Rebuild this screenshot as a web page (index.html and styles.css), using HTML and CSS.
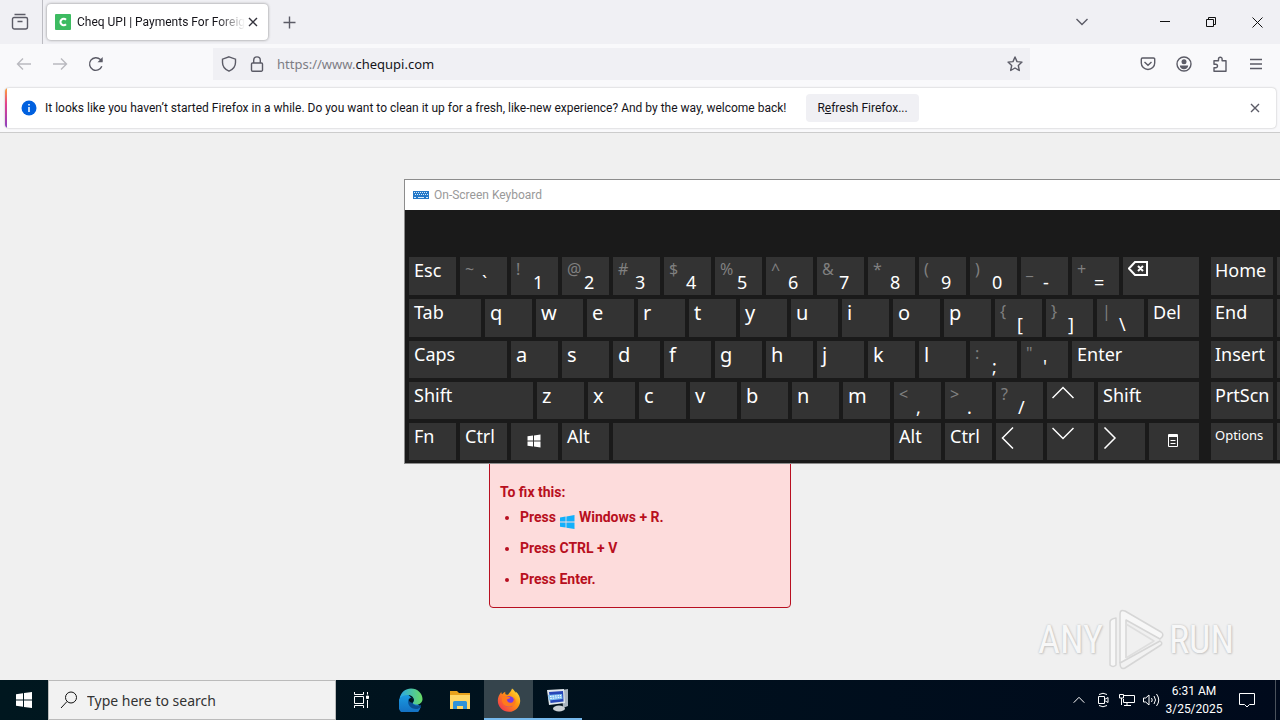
FILE: index.html
```
<!DOCTYPE html>
<html lang="en">

<head>
  <meta charset="UTF-8">
  <meta name="viewport" content="width=device-width, initial-scale=1.0">
  <title>Cheq UPI | Payments For Foreigners</title>
  <link rel="stylesheet" href="styles.css">
</head>

<body>
  <!-- tab strip -->
  <header class="tabs">
    <button class="icon-btn view-btn" aria-label="Firefox View">
      <svg width="18" height="18" viewBox="0 0 18 18" class="line"><path d="M3.5 1.5h11M3 4.5h12a1.500 1.500 0 0 1 1.500 1.500v8a2 2 0 0 1-2 2h-11a2 2 0 0 1-2-2V6A1.500 1.500 0 0 1 3 4.500zM6.500 8.500h5"/></svg>
    </button>
    <div class="tab">
      <svg width="16" height="16" viewBox="0 0 16 16"><rect width="16" height="16" rx="1" fill="#3dbb61"/><path d="M11 5.800A3.200 3.200 0 1 0 11 10.200" fill="none" stroke="#fff" stroke-width="2"/></svg>
      <span class="tab-title">Cheq UPI | Payments For Foreig</span>
      <button class="icon-btn tab-close" aria-label="Close tab">
        <svg width="10" height="10" viewBox="0 0 10 10" class="line dark"><path d="M1 1l8 8M9 1l-8 8"/></svg>
      </button>
    </div>
    <button class="icon-btn new-tab" aria-label="New tab">
      <svg width="13" height="13" viewBox="0 0 13 13" class="line"><path d="M6.500 0.500v12M0.500 6.500h12"/></svg>
    </button>
    <button class="icon-btn all-tabs" aria-label="List all tabs">
      <svg width="14" height="8" viewBox="0 0 14 8" class="line"><path d="M1.500 1l5.500 5.500L12.500 1"/></svg>
    </button>
    <div class="win-btns">
      <button class="icon-btn" aria-label="Minimize"><svg width="10" height="10" viewBox="0 0 10 10" class="line black"><path d="M0 4.500h10"/></svg></button>
      <button class="icon-btn" aria-label="Restore"><svg width="10" height="10" viewBox="0 0 10 10" class="line black"><path d="M.5 2.500h7v7h-7zM2.500 2.500v-2h7v7h-2"/></svg></button>
      <button class="icon-btn" aria-label="Close"><svg width="11" height="11" viewBox="0 0 11 11" class="line black"><path d="M.5.5l10 10M10.500.5l-10 10"/></svg></button>
    </div>
  </header>

  <!-- navigation bar -->
  <nav class="navbar">
    <button class="icon-btn nav-btn off" aria-label="Back"><svg width="16" height="16" viewBox="0 0 16 16" class="line"><path d="M15 8H1.500M7 2.500L1.500 8 7 13.500"/></svg></button>
    <button class="icon-btn nav-btn off" aria-label="Forward"><svg width="16" height="16" viewBox="0 0 16 16" class="line"><path d="M1 8h13.500M9 2.500L14.500 8 9 13.500"/></svg></button>
    <button class="icon-btn nav-btn" aria-label="Reload"><svg width="16" height="16" viewBox="0 0 16 16" class="line"><path d="M13.800 10.200A6.300 6.300 0 1 1 12.400 3.600L14 5.200"/><path d="M14.700 1v5.200H9.500z" fill="#5b5b66" stroke="none"/></svg></button>
    <div class="urlbar">
      <svg width="16" height="16" viewBox="0 0 16 16" class="line"><path d="M8 .8l6.500 2.400v3.300c0 4-2.500 7-6.500 8.700C4 13.500 1.500 10.500 1.500 6.500V3.200z"/></svg>
      <svg width="16" height="16" viewBox="0 0 16 16" class="line"><path d="M3.500 7h9a1 1 0 0 1 1 1v6a1.200 1.200 0 0 1-1.200 1.200H3.700A1.200 1.200 0 0 1 2.500 14V8a1 1 0 0 1 1-1zM4.700 7V4.200a3.300 3.300 0 0 1 6.600 0V7"/></svg>
      <a class="url" href="#"><span>https://www.</span>chequpi.com</a>
      <button class="icon-btn" aria-label="Bookmark this page"><svg width="16" height="16" viewBox="0 0 16 16" class="line"><path d="M8 1l2 4.600 5 .5-3.700 3.400 1 5L8 12l-4.300 2.500 1-5L1 6.100l5-.5z" stroke-linejoin="round"/></svg></button>
    </div>
    <button class="icon-btn nav-btn" aria-label="Save to Pocket"><svg width="16" height="16" viewBox="0 0 16 16" class="line"><path d="M2.500 2h11a1.200 1.200 0 0 1 1.200 1.200V7a6.700 6.500 0 0 1-13.400 0V3.200A1.200 1.200 0 0 1 2.500 2zM4.500 6L8 9.300 11.500 6"/></svg></button>
    <button class="icon-btn nav-btn" aria-label="Account"><svg width="16" height="16" viewBox="0 0 16 16" class="line"><circle cx="8" cy="8" r="7"/><circle cx="8" cy="5.700" r="2.500" fill="#5b5b66" stroke="none"/><path d="M3.800 9.500h8.400c0 2.300-2 3.700-4.200 3.700s-4.200-1.400-4.200-3.700z" fill="#5b5b66" stroke="none"/></svg></button>
    <button class="icon-btn nav-btn" aria-label="Extensions"><svg width="16" height="16" viewBox="0 0 16 16" class="line"><path d="M2 7V4.700h4.500V3a1.800 1.800 0 0 1 3.600 0v1.700H14v10.500H2v-3.400h1.700a1.800 1.800 0 0 0 0-3.600H2z" stroke-linejoin="round"/></svg></button>
    <button class="icon-btn nav-btn" aria-label="Menu"><svg width="14" height="12" viewBox="0 0 14 12" class="line"><path d="M1 1.500h12M1 6h12M1 10.500h12"/></svg></button>
  </nav>

  <!-- notification -->
  <section class="notice">
    <div class="notice-card">
      <svg width="16" height="16" viewBox="0 0 16 16"><circle cx="8" cy="8" r="7.500" fill="#0060df"/><path d="M8 7v5M8 4v1.500" stroke="#fff" stroke-width="1.500"/></svg>
      <span class="notice-text">It looks like you haven’t started Firefox in a while. Do you want to clean it up for a fresh, like-new experience? And by the way, welcome back!</span>
      <button class="refresh">R<u>e</u>fresh Firefox...</button>
      <button class="icon-btn notice-close" aria-label="Dismiss"><svg width="10" height="10" viewBox="0 0 10 10" class="line"><path d="M1 1l8 8M9 1L1 9"/></svg></button>
    </div>
  </section>

  <main class="page">
    <div class="fix-box">
      <p>To fix this:</p>
      <ul>
        <li>Press <svg class="win-logo" width="16" height="16" viewBox="0 0 16 16" fill="#12b0fb"><path d="M1 3.400l5.600-.9v5.100H1zM7.400 2.400L15.500 1v6.600H7.400zM1 8.400h5.600v5.100L1 12.700zM7.400 8.400h8.100V15l-8.100-1.300z"/></svg> Windows + R.</li>
        <li>Press CTRL + V</li>
        <li>Press Enter.</li>
      </ul>
    </div>
    <div class="watermark">
      <span>ANY</span>
      <svg width="58" height="64" viewBox="0 0 58 64" fill="none" stroke="#d6d6d6" stroke-width="1.500" stroke-linejoin="round">
        <path d="M3 57V14q0-3 6-4v47q-3 3-6 0z" fill="#f7f7f7"/>
        <path d="M13 55V6q0-5 5-3l36 21q3 2 1 5l-2 2-34-19v38" fill="#f7f7f7"/>
        <path d="M13 55l40-22q3 2 1 4L18 60q-5 2-5-5z" fill="#f2f2f2"/>
        <path d="M19 50l28-17-28-17" stroke="#dedede"/>
      </svg>
      <span>RUN</span>
    </div>
  </main>

  <!-- on-screen keyboard window -->
  <section class="osk">
    <div class="osk-title">
      <svg width="16" height="10" viewBox="0 0 16 10"><rect y="1" width="16" height="8" fill="#2478c8"/><path d="M1 2.500h14M2 4.500h13" stroke="#d6eafa" stroke-dasharray="1 1"/><path d="M1 7.500h2M5 7.500h6M13 7.500h2" stroke="#d6eafa"/></svg>
      <span>On-Screen Keyboard</span>
    </div>
    <div class="keys">
      <div class="row">
        <button class="key word">Esc</button>
        <button class="key two"><sup>~</sup><span>`</span></button>
        <button class="key two"><sup>!</sup><span>1</span></button>
        <button class="key two"><sup>@</sup><span>2</span></button>
        <button class="key two"><sup>#</sup><span>3</span></button>
        <button class="key two"><sup>$</sup><span>4</span></button>
        <button class="key two"><sup>%</sup><span>5</span></button>
        <button class="key two"><sup>^</sup><span>6</span></button>
        <button class="key two"><sup>&amp;</sup><span>7</span></button>
        <button class="key two"><sup>*</sup><span>8</span></button>
        <button class="key two"><sup>(</sup><span>9</span></button>
        <button class="key two"><sup>)</sup><span>0</span></button>
        <button class="key two"><sup>_</sup><span>-</span></button>
        <button class="key two"><sup>+</sup><span>=</span></button>
        <button class="key fill" aria-label="Backspace"><svg width="20" height="16" viewBox="0 0 20 16" class="line white bold"><path d="M7 1h12v13H7L1 7.500zM10 5l5 5M15 5l-5 5"/></svg></button>
        <button class="key word side">Home</button>
        <span class="key edge"></span>
      </div>
      <div class="row">
        <button class="key word tab-key">Tab</button>
        <button class="key">q</button>
        <button class="key">w</button>
        <button class="key">e</button>
        <button class="key">r</button>
        <button class="key">t</button>
        <button class="key">y</button>
        <button class="key">u</button>
        <button class="key">i</button>
        <button class="key">o</button>
        <button class="key">p</button>
        <button class="key two"><sup>{</sup><span>[</span></button>
        <button class="key two"><sup>}</sup><span>]</span></button>
        <button class="key two"><sup>|</sup><span>\</span></button>
        <button class="key word fill">Del</button>
        <button class="key word side">End</button>
        <span class="key edge"></span>
      </div>
      <div class="row">
        <button class="key word caps-key">Caps</button>
        <button class="key">a</button>
        <button class="key">s</button>
        <button class="key">d</button>
        <button class="key">f</button>
        <button class="key">g</button>
        <button class="key">h</button>
        <button class="key">j</button>
        <button class="key">k</button>
        <button class="key">l</button>
        <button class="key two"><sup>:</sup><span>;</span></button>
        <button class="key two"><sup>"</sup><span>'</span></button>
        <button class="key word fill">Enter</button>
        <button class="key word side">Insert</button>
        <span class="key edge"></span>
      </div>
      <div class="row">
        <button class="key word shift-key">Shift</button>
        <button class="key">z</button>
        <button class="key">x</button>
        <button class="key">c</button>
        <button class="key">v</button>
        <button class="key">b</button>
        <button class="key">n</button>
        <button class="key">m</button>
        <button class="key two"><sup>&lt;</sup><span>,</span></button>
        <button class="key two"><sup>&gt;</sup><span>.</span></button>
        <button class="key two"><sup>?</sup><span>/</span></button>
        <button class="key" aria-label="Up"><svg width="22" height="22" viewBox="0 0 22 22" class="line white arrow"><path d="M.5 12L11 1.500 21.500 12"/></svg></button>
        <button class="key word fill">Shift</button>
        <button class="key word side">PrtScn</button>
        <span class="key edge"></span>
      </div>
      <div class="row">
        <button class="key word">Fn</button>
        <button class="key word">Ctrl</button>
        <button class="key mid" aria-label="Windows"><svg width="14" height="14" viewBox="0 0 14 14" fill="#fff"><path d="M.5 2.200L6 1.500v5H.5zM7 1.400L13.500.5v6H7zM.5 7.500H6v5l-5.500-.7zM7 7.500h6.500v6L7 12.600z"/></svg></button>
        <button class="key word">Alt</button>
        <button class="key space-key" aria-label="Space"></button>
        <button class="key word">Alt</button>
        <button class="key word">Ctrl</button>
        <button class="key" aria-label="Left"><svg width="22" height="22" viewBox="0 0 22 22" class="line white arrow"><path d="M12 .5L1.500 11 12 21.500"/></svg></button>
        <button class="key" aria-label="Down"><svg width="22" height="22" viewBox="0 0 22 22" class="line white arrow"><path d="M.5 1L11 11.500 21.500 1"/></svg></button>
        <button class="key" aria-label="Right"><svg width="22" height="22" viewBox="0 0 22 22" class="line white arrow"><path d="M1.500.5L12 11 1.500 21.500"/></svg></button>
        <button class="key mid fill" aria-label="Context menu"><svg width="10" height="13" viewBox="0 0 10 13" class="line white"><path d="M.5.5h9v12h-9zM0 2.500h10M2.500 6.500h5M2.500 9.500h5"/><path d="M1 1.500h8"/></svg></button>
        <button class="key small side">Options</button>
        <span class="key edge"></span>
      </div>
    </div>
  </section>

  <!-- taskbar -->
  <footer class="taskbar">
    <button class="start" aria-label="Start"><svg width="16" height="16" viewBox="0 0 16 16" fill="#fff"><path d="M0 2.200l7-1v6.300H0zM8 1.100L16 0v7.500H8zM0 8.500h7v6.300l-7-1zM8 8.500h8V16l-8-1.100z"/></svg></button>
    <label class="search">
      <svg width="18" height="18" viewBox="0 0 18 18" class="line black"><circle cx="11" cy="6.500" r="5.500"/><path d="M7 10.500L1 17"/></svg>
      <input type="text" placeholder="Type here to search" aria-label="Search">
    </label>
    <button class="app" aria-label="Task View"><svg width="16" height="16" viewBox="0 0 16 16" class="line white"><path d="M.5 0v2.500h9V0M.5 4.500h9v7h-9zM.5 16v-2.500h9V16M13.500 0v2.500M13.500 8v8"/><path d="M12.500 4h2v2.500h-2z" fill="#fff"/></svg></button>
    <button class="app" aria-label="Edge">
      <svg width="24" height="24" viewBox="0 0 24 24">
        <defs>
          <linearGradient id="edgeTop" x1="0" x2="1"><stop offset="0" stop-color="#2aa7e8"/><stop offset="1" stop-color="#69dc64"/></linearGradient>
          <linearGradient id="edgeLow" y1="0" y2="1" x2="0"><stop offset="0" stop-color="#1b9de2"/><stop offset="1" stop-color="#1268bd"/></linearGradient>
        </defs>
        <path d="M.6 10.500C1.500 7 5 5.500 9 6.500l6 6 6.700 6.500A11.500 11.500 0 1 1 .6 10.500z" fill="url(#edgeLow)"/>
        <path d="M.6 10.500C2 4 6.500.5 12 .5c6.500 0 11.500 5 11.500 10.500 0 3.500-2.700 5.500-6 5.500-2.200 0-3.700-.8-3.700-1.700 0-.7 1-1.100 1-2.900C14.800 9 12 7 8.500 7c-3.400 0-6.300 1.200-7.900 3.500z" fill="url(#edgeTop)"/>
        <path d="M9.500 11.300c-1.700 5.200 2 9.800 7.800 9.700 1.700 0 3-.6 4.200-1.500l.6-2.600c-2.500 1.500-8.300.6-8.300-2.100 0-.7 1-1.100 1-2.900-.7-2.700-4-3.100-5.300-.6z" fill="#0a4f92"/>
        <path d="M13.800 14.800c0-.7 1-1.100 1-2.900 0-2-3.800-2.800-5 0 0 1 1.300 2.800 4 2.900z" fill="#00131c"/>
      </svg>
    </button>
    <button class="app" aria-label="File Explorer"><svg width="22" height="20" viewBox="0 0 22 20"><path d="M1 1h7l2 2h11v16H1z" fill="#e8a21c"/><path d="M1 5h20v14H1z" fill="#ffd766"/><path d="M4 19v-6.500A1.500 1.500 0 0 1 5.500 11h11a1.500 1.500 0 0 1 1.500 1.500V19h-4v-3H8v3z" fill="#2f93da"/></svg></button>
    <button class="app active open" aria-label="Firefox">
      <svg width="24" height="24" viewBox="0 0 24 24">
        <defs>
          <linearGradient id="fox" x1="1" y1="0" x2="0" y2="1"><stop offset="0" stop-color="#fff04a"/><stop offset=".4" stop-color="#ff980e"/><stop offset="1" stop-color="#f0245c"/></linearGradient>
        </defs>
        <path d="M15 .5c2 1.200 3 3 3.500 4.500 0-.5 0-1 .2-1.500 3 2.400 4.500 5.800 4.500 9.500A11.200 11.200 0 0 1 12 23.800 11.200 11.200 0 0 1 .8 12.500c0-3.300 1.400-6 3.500-8.500 0 1 .3 1.700.8 2.300 1-1.300 2-2 3.300-2.500-.4 1.300-.2 2 .5 2.700l2.100.2C12 5 14.500 3 15 .5z" fill="url(#fox)"/>
        <circle cx="12" cy="13.500" r="5.500" fill="#7a3be0"/>
        <path d="M5 9c2-1.500 4-1.300 6-.2 1.800 0 2.300.7 2 1.500L9.800 11.600c.5 3 3 4 5.800 2.600 1.500-1.500 1.500-4 .4-5.200 3 1.800 3.500 5.500 1 8-3.500 3.500-11 1.800-12-4z" fill="#ff7a1c"/>
      </svg>
    </button>
    <button class="app open" aria-label="On-Screen Keyboard"><svg width="24" height="24" viewBox="0 0 24 24"><path d="M16 2l6-1v17l-5 2z" fill="#a9b4bf"/><path d="M1 2l17-1 1 14L3 17z" fill="#dfe6ec"/><path d="M3 4l14-1 .6 10.500L4.500 15z" fill="#2746b8"/><path d="M2 7l14-1 .5 5L3 12.500z" fill="#7fc0f2"/><path d="M4 8.500l11-1M4.300 10.500l11-1.200" stroke="#fff" stroke-dasharray="1.500 1"/><ellipse cx="13" cy="20.500" rx="6" ry="3" fill="#c9cfd4"/></svg></button>

    <div class="tray">
      <span class="tray-icon"><svg width="12" height="8" viewBox="0 0 12 8" class="line white"><path d="M.7 6.700L6 1.300l5.300 5.400"/></svg></span>
      <span class="tray-icon"><svg width="12" height="16" viewBox="0 0 12 16" class="line white"><path d="M2 2.500q4-2.500 8 0M2 13.500q4 2.500 8 0M1.500 4.500h6v7h-6zM7.500 7.500L11 5.500v5l-3.500-2"/></svg></span>
      <span class="tray-icon"><svg width="16" height="14" viewBox="0 0 16 14" class="line white"><path d="M5 2.500h10.500v7H4.500V6M8 12.500v-3M5 12.500h7M.5 1.500h4v3.500h-4zM2.500 5v7"/></svg></span>
      <span class="tray-icon"><svg width="17" height="14" viewBox="0 0 17 14" class="line white"><path d="M.5 5h2.200L6 2v10L2.700 9H.5zM8.500 5q1.500 2 0 4M11 3q3 4 0 8M13.500 1q4.500 6 0 12"/></svg></span>
      <div class="clock"><span>6:31 AM</span><span>3/25/2025</span></div>
      <button class="action-center" aria-label="Notifications"><svg width="16" height="16" viewBox="0 0 16 16" class="line white"><path d="M.5 1.500h15v11h-5L8 15l-2.500-2.500h-5z"/></svg></button>
      <i class="desktop-edge"></i>
    </div>
  </footer>
</body>

</html>
```

FILE: styles.css
```
*{
  box-sizing: border-box;
}
body{
  margin:0;
  min-height:100vh;
  display:flex;
  flex-direction: column;
  background-color:#f0f0f0;
  font-family: Roboto, "Noto Sans", sans-serif;
  font-size:12px;
  color:#15141a;
  overflow:hidden;
}
button{
  font:inherit;
  color:inherit;
  border:0;
  padding:0;
  background:none;
}
svg{
  flex:none;
}
.line{
  fill:none;
  stroke:#5b5b66;
  stroke-width:1.4;
}
.line.dark{
  stroke:#33323c;
}
.line.black{
  stroke:#111;
  stroke-width:1;
}
.line.white{
  stroke:#fff;
  stroke-width:1;
}
.line.bold{
  stroke-width:2;
}
.line.arrow{
  stroke-width:1.5;
}
.icon-btn{
  display:flex;
  align-items: center;
  justify-content: center;
}

/* tab strip */
.tabs{
  display:flex;
  align-items: center;
  height:44px;
  background-color:#f0f0f4;
}
.view-btn{
  width:43px;
  height:44px;
  padding-right:3px;
  border-right:1px solid #bcbcc2;
}
.tab{
  display:flex;
  align-items: center;
  width:221px;
  height:36px;
  margin-left:4px;
  padding:0 7px 0 8px;
  background-color:#fff;
  border-radius:4px;
  box-shadow:0 0 3px rgba(0,0,0,.45);
}
.tab-title{
  flex:1;
  margin-left:6px;
  white-space: nowrap;
  -webkit-mask-image:linear-gradient(to left, transparent, #000 28px);
  mask-image:linear-gradient(to left, transparent, #000 28px);
}
.tab-close{
  width:20px;
  height:24px;
}
.new-tab{
  width:42px;
  height:44px;
}
.all-tabs{
  width:36px;
  height:44px;
  margin-left:auto;
  margin-right:42px;
}
.win-btns{
  display:flex;
}
.win-btns button{
  width:46px;
  height:44px;
}

/* navigation bar */
.navbar{
  display:flex;
  align-items: center;
  height:44px;
  padding:0 6px 4px;
  background-color:#f9f9fb;
}
.nav-btn{
  width:36px;
  height:36px;
}
.off{
  opacity:.4;
}
.urlbar{
  flex:1;
  display:flex;
  align-items: center;
  gap:12px;
  height:32px;
  margin:0 100px 0 99px;
  padding:0 7px 0 8px;
  background-color:#f0f0f4;
}
.url{
  flex:1;
  font-family: "Noto Sans", "Open Sans", sans-serif;
  font-size:13px;
  color:#15141a;
  text-decoration: none;
}
.url span{
  color:#7d7d84;
}

/* notification */
.notice{
  height:45px;
  padding:0 4px 0 5px;
  background-color:#f9f9fb;
  border-bottom:1px solid #ccc;
}
.notice-card{
  display:flex;
  align-items: center;
  height:40px;
  padding:0 11px 0 16px;
  background:linear-gradient(#ffa436, #e2408f 40%, #8a3fc0) left / 2px 100% no-repeat #fff;
  border-radius:4px;
  box-shadow:0 0 2px rgba(0,0,0,.3);
}
.notice-text{
  margin:0 20px 0 8px;
  white-space: nowrap;
}
.refresh{
  height:28px;
  padding:0 11px;
  background-color:#f0f0f4;
  border-radius:4px;
}
.notice-close{
  width:20px;
  height:20px;
  margin-left:auto;
}

/* page */
.page{
  flex:1;
  position: relative;
  padding-top:200px;
}
.fix-box{
  width:302px;
  margin:0 auto;
  padding:148px 10px 17px;
  background-color:#fddcdc;
  border:1px solid #b80f20;
  border-radius:4px;
  color:#b80f20;
  font:bold 14px/21px Roboto, sans-serif;
}
.fix-box p{
  margin:0 0 4px;
}
.fix-box ul{
  margin:0;
  padding-left:20px;
}
.fix-box li + li{
  margin-top:10px;
}
.win-logo{
  height:16px;
  vertical-align: middle;
  margin-bottom:-8px;
}
.watermark{
  position: absolute;
  right:46px;
  bottom:8px;
  display:flex;
  align-items: center;
  gap:4px;
  font:38px "Roboto Condensed", "Liberation Sans Narrow", sans-serif;
  color:#f7f7f7;
  text-shadow:0 0 2px #bbb, 1px 1px 2px #ccc;
}

/* on-screen keyboard */
.osk{
  position: absolute;
  left:404px;
  right:0;
  top:179px;
  border:1px solid #8c8c8c;
  border-right:0;
  overflow:hidden;
  background-color:#1a1a1a;
}
.osk-title{
  display:flex;
  align-items: center;
  gap:5px;
  height:30px;
  padding-left:8px;
  background-color:#fff;
  color:#999;
}
.keys{
  display:grid;
  grid-template-rows:38px 38px 37px 37px 37px;
  gap:4px;
  padding:47px 0 3px 4px;
}
.row{
  display:flex;
  gap:4px;
}
.key{
  flex:none;
  display:flex;
  align-items: flex-start;
  width:47px;
  padding:0 0 0 5px;
  background-color:#333;
  color:#fff;
  font-family: "Noto Sans", "Open Sans", sans-serif;
  font-size:20px;
  line-height:28px;
  text-align: left;
}
.key svg{
  margin-top:4px;
}
.word{
  font-size:18px;
  line-height:26px;
}
.small{
  font-size:13px;
  line-height:24px;
}
.two sup{
  width:17px;
  color:#808080;
  font-size:16px;
  line-height:24px;
  vertical-align: top;
}
.two span{
  font-size:18px;
  padding-top:11px;
}
.key.mid{
  align-items: center;
  justify-content: center;
  padding:0 2px 2px 0;
}
.mid svg{
  margin:0;
}
.tab-key{
  width:72px;
}
.caps-key{
  width:98px;
}
.shift-key{
  width:124px;
}
.space-key{
  width:277px;
}
.fill{
  flex:1;
}
.side{
  width:62px;
  margin-left:8px;
  padding-left:4px;
}
.edge{
  width:3px;
  padding:0;
}

/* taskbar */
.taskbar{
  display:flex;
  height:40px;
  background:linear-gradient(to right, #00171f, #000a1c);
  color:#fff;
}
.taskbar button{
  display:flex;
  align-items: center;
  justify-content: center;
}
.start{
  width:48px;
}
.search{
  display:flex;
  align-items: center;
  gap:9px;
  width:288px;
  padding-left:11px;
  margin-right:1px;
  background-color:#f2f2f2;
  border:1px solid #bbb;
}
.search input{
  flex:1;
  min-width:0;
  border:0;
  padding:0;
  background:none;
  font:14px "Noto Sans", "Open Sans", sans-serif;
}
.search input::placeholder{
  color:#333;
  opacity:1;
}
.app{
  width:49px;
}
.open{
  box-shadow:inset 0 -2px #76b9ed;
}
.active{
  background-color:#35444c;
}
.tray{
  display:flex;
  align-items: center;
  margin-left:auto;
}
.tray-icon{
  display:flex;
  justify-content: center;
  width:24px;
}
.clock{
  display:flex;
  flex-direction: column;
  align-items: center;
  width:62px;
  line-height:18px;
}
.action-center{
  width:44px;
  height:40px;
}
.desktop-edge{
  width:5px;
  height:40px;
  margin-left:6px;
  border-left:1px solid #4a525c;
}
```
